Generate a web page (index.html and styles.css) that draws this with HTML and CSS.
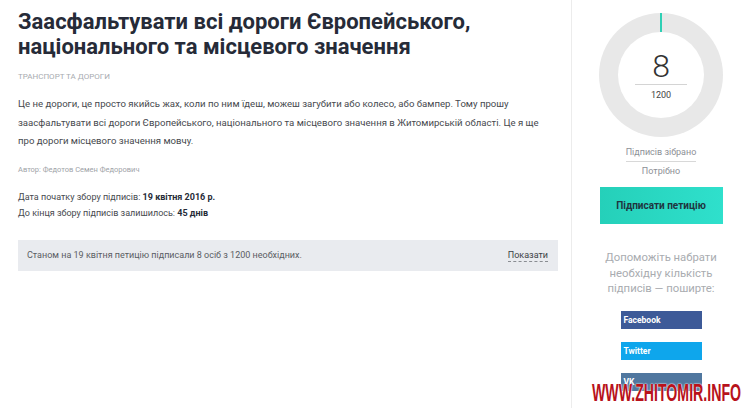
FILE: index.html
```html
<!DOCTYPE html>
<html lang="uk">
<head>
    <meta charset="UTF-8">
    <title>Заасфальтувати всі дороги</title>
    <link rel="stylesheet" href="styles.css">
</head>
<body>
    <div class="page">
        <div class="main">
            <h1 class="title">Заасфальтувати всі дороги Європейського, національного та місцевого значення</h1>
            <div class="category">ТРАНСПОРТ ТА ДОРОГИ</div>
            <p class="text">Це не дороги, це просто якийсь жах, коли по ним їдеш, можеш загубити або колесо, або бампер. Тому прошу заасфальтувати всі дороги Європейського, національного та місцевого значення в Житомирській області. Це я ще про дороги місцевого значення мовчу.</p>
            <div class="author">Автор: Федотов Семен Федорович</div>
            <div class="dates">
                <div>Дата початку збору підписів: <b>19 квітня 2016 р.</b></div>
                <div>До кінця збору підписів залишилось: <b>45 днів</b></div>
            </div>
            <div class="status">
                <span>Станом на 19 квітня петицію підписали 8 осіб з 1200 необхідних.</span>
                <a class="show">Показати</a>
            </div>
        </div>
        <div class="side">
            <div class="ring">
                <div class="ring-tick"></div>
                <div class="ring-inner">
                    <div class="count">8</div>
                    <div class="need">1200</div>
                </div>
            </div>
            <div class="legend">
                <div class="legend-top">Підписів зібрано</div>
                <div>Потрібно</div>
            </div>
            <button class="sign">Підписати петицію</button>
            <p class="help">Допоможіть набрати необхідну кількість підписів — поширте:</p>
            <div class="share">
                <a class="fb">Facebook</a>
                <a class="tw">Twitter</a>
                <a class="vk">VK</a>
            </div>
        </div>
    </div>
    <div class="watermark">WWW.ZHITOMIR.INFO</div>
</body>
</html>
```
FILE: styles.css
```css
body {
    margin: 0;
    background: #fff;
    font-family: Roboto, "Noto Sans", sans-serif;
    overflow: hidden;
}

.page {
    display: flex;
    height: 408px;
}

.main {
    width: 540px;
    padding: 9px 0 0 18px;
}

.title {
    margin: 0;
    font-size: 22px;
    line-height: 25px;
    font-weight: 700;
    color: #262b38;
}

.category {
    margin-top: 13px;
    font-size: 8px;
    color: #a8abb0;
}

.text {
    margin: 14px 0 0;
    max-width: 522px;
    font-size: 9.6px;
    line-height: 18.5px;
    color: #46494e;
}

.author {
    margin-top: 14px;
    font-size: 7.5px;
    color: #a0a3a8;
}

.dates {
    margin-top: 15px;
    font-size: 9px;
    line-height: 16px;
    color: #46494e;
}

.dates b {
    color: #262b38;
}

.status {
    display: flex;
    justify-content: space-between;
    align-items: center;
    margin-top: 19px;
    height: 31px;
    padding: 0 10px 0 9px;
    background: #e9ebef;
    font-size: 9px;
    color: #5a5d63;
}

.show {
    color: #3c3f44;
    border-bottom: 1px dashed #8a8d92;
    line-height: 12px;
}

.side {
    width: 178px;
    margin-left: 13px;
    border-left: 1px solid #ececec;
    display: flex;
    flex-direction: column;
    align-items: center;
    padding-top: 13px;
}

.ring {
    position: relative;
    width: 124px;
    height: 124px;
    border-radius: 50%;
    background: #e8e8e8;
    display: flex;
    align-items: center;
    justify-content: center;
}

.ring-tick {
    position: absolute;
    top: 0;
    left: 61px;
    width: 2px;
    height: 19px;
    background: #2fd0b5;
}

.ring-inner {
    width: 86px;
    height: 86px;
    border-radius: 50%;
    background: #fff;
    display: flex;
    flex-direction: column;
    align-items: center;
    justify-content: center;
}

.count {
    font-size: 32px;
    font-weight: 300;
    line-height: 30px;
    color: #333;
    width: 52px;
    text-align: center;
    padding-bottom: 3px;
    border-bottom: 1px solid #d4d4d4;
}

.need {
    margin-top: 5px;
    font-size: 9px;
    color: #444;
}

.legend {
    margin-top: 9px;
    font-size: 9px;
    color: #8d9096;
    text-align: center;
    line-height: 13px;
}

.legend-top {
    padding-bottom: 2px;
    margin-bottom: 3px;
    border-bottom: 1px solid #d8d8d8;
}

.sign {
    margin-top: 9px;
    width: 123px;
    height: 37px;
    border: none;
    background: linear-gradient(90deg, #25d0b9, #2fe0cc);
    font-family: Roboto, sans-serif;
    font-size: 10px;
    font-weight: 700;
    color: #1f3540;
}

.help {
    margin: 26px 0 0;
    width: 120px;
    text-align: center;
    font-size: 11.3px;
    line-height: 15.5px;
    color: #a9acb0;
}

.share {
    margin-top: 14px;
    display: flex;
    flex-direction: column;
    gap: 13px;
}

.share a {
    display: block;
    width: 78px;
    height: 18px;
    padding-left: 3px;
    font-size: 8.5px;
    font-weight: 700;
    line-height: 18px;
    color: #fff;
}

.fb {
    background: #3d5a98;
}

.tw {
    background: #0ea6ec;
}

.vk {
    background: #50779f;
}

.watermark {
    position: absolute;
    left: 592px;
    top: 380px;
    white-space: nowrap;
    font-family: "Liberation Sans", sans-serif;
    font-weight: 700;
    font-size: 23px;
    color: #b8121b;
    transform: scaleX(0.615);
    transform-origin: left top;
    text-shadow: 0 0 2px #fff, 0 0 2px #fff;
}
```
